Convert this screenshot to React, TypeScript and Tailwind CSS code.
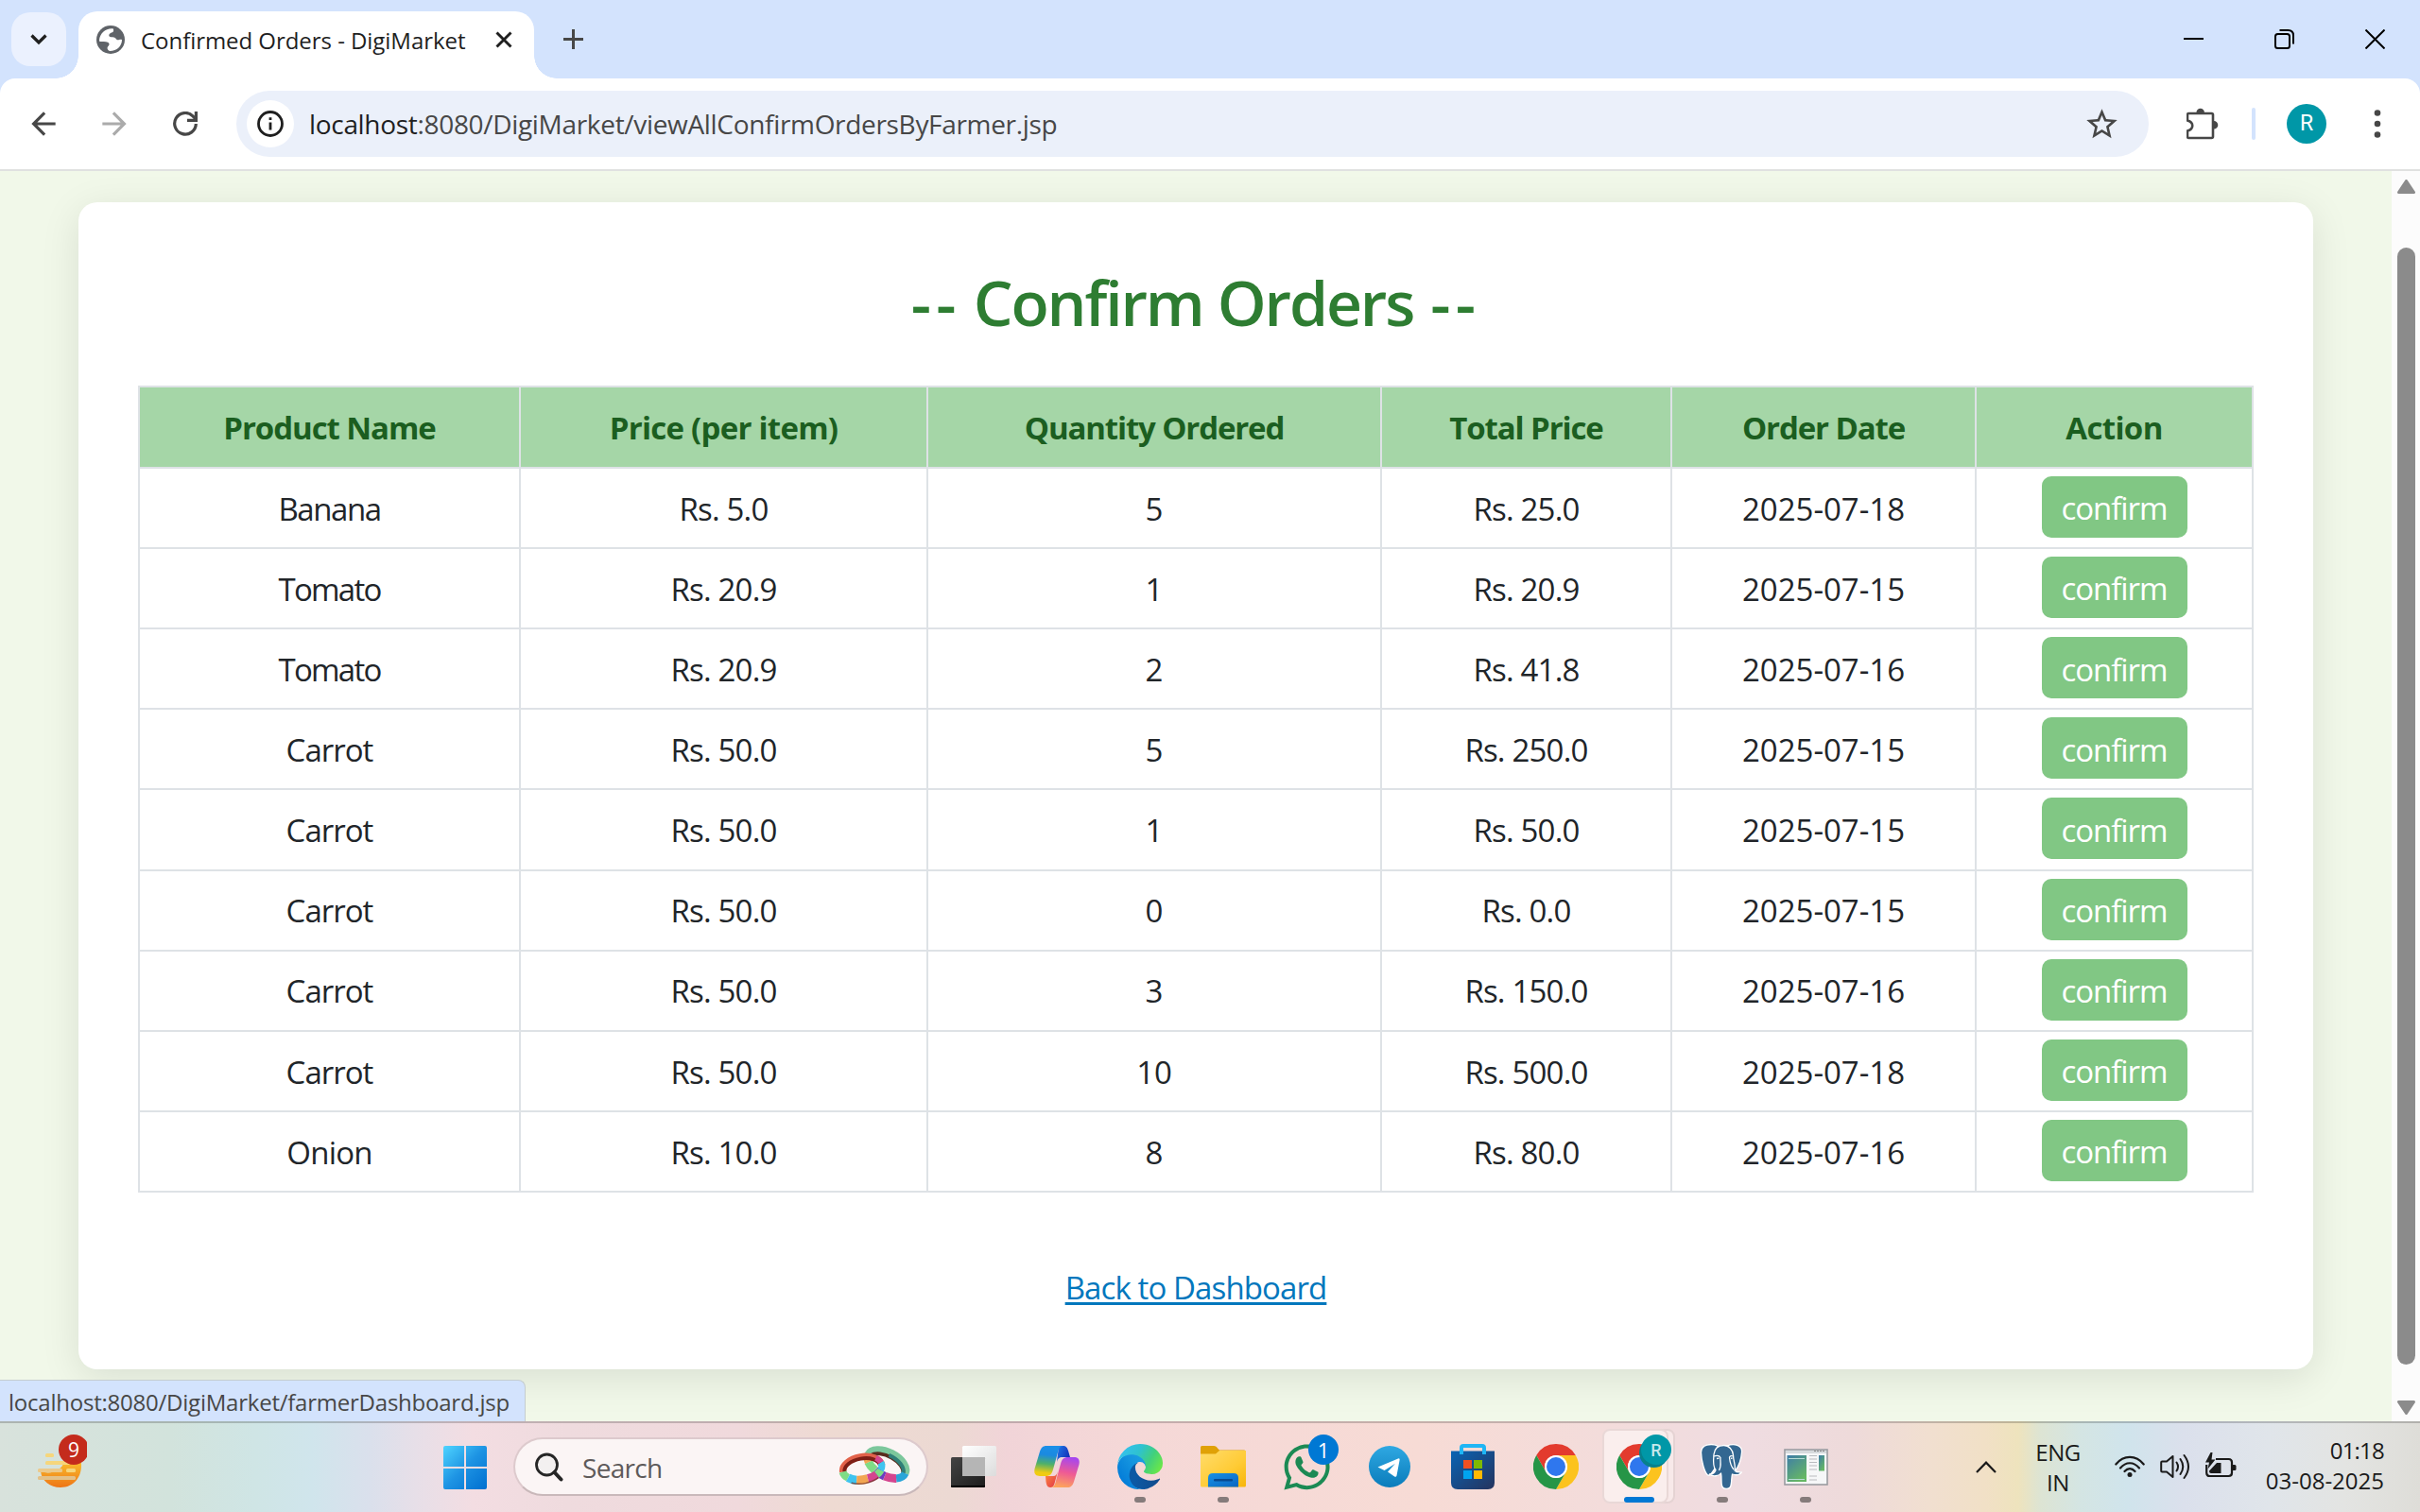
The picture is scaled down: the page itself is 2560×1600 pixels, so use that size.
import React from "react";
import { MdArrowBack, MdArrowForward, MdStarBorder } from "react-icons/md";
import { FaWhatsapp } from "react-icons/fa";

type Order = { name: string; price: string; qty: string; total: string; date: string };

const orders: Order[] = [
  { name: "Banana", price: "Rs. 5.0", qty: "5", total: "Rs. 25.0", date: "2025-07-18" },
  { name: "Tomato", price: "Rs. 20.9", qty: "1", total: "Rs. 20.9", date: "2025-07-15" },
  { name: "Tomato", price: "Rs. 20.9", qty: "2", total: "Rs. 41.8", date: "2025-07-16" },
  { name: "Carrot", price: "Rs. 50.0", qty: "5", total: "Rs. 250.0", date: "2025-07-15" },
  { name: "Carrot", price: "Rs. 50.0", qty: "1", total: "Rs. 50.0", date: "2025-07-15" },
  { name: "Carrot", price: "Rs. 50.0", qty: "0", total: "Rs. 0.0", date: "2025-07-15" },
  { name: "Carrot", price: "Rs. 50.0", qty: "3", total: "Rs. 150.0", date: "2025-07-16" },
  { name: "Carrot", price: "Rs. 50.0", qty: "10", total: "Rs. 500.0", date: "2025-07-18" },
  { name: "Onion", price: "Rs. 10.0", qty: "8", total: "Rs. 80.0", date: "2025-07-16" },
];

const headers: [string, string][] = [
  ["Product Name", "tracking-[-0.0323em]"],
  ["Price (per item)", "tracking-[-0.0225em]"],
  ["Quantity Ordered", "tracking-[-0.0345em]"],
  ["Total Price", "tracking-[-0.0339em]"],
  ["Order Date", "tracking-[-0.0339em]"],
  ["Action", "tracking-[-0.0196em]"],
];

/* ---------- Browser chrome ---------- */

function TabStrip() {
  return (
    <div className="flex h-[83px] items-start bg-[#d3e3fd]">
      <div className="mt-[13px] ml-3 flex h-[57px] w-[58px] items-center justify-center rounded-[20px] bg-[#ebf1fe]">
        <svg width="18" height="12" viewBox="0 0 18 12" fill="none" stroke="#1f1f1f" strokeWidth="3.2">
          <path d="M1.5 1.5 9 9l7.5-7.5" />
        </svg>
      </div>
      <div className="relative mt-[12px] ml-[13px] flex h-[71px] w-[482px] items-start rounded-t-[20px] bg-white">
        <span className="absolute bottom-0 -left-6 h-6 w-6 bg-[radial-gradient(circle_at_0_0,transparent_23.5px,#fff_24px)]" />
        <span className="absolute -right-6 bottom-0 h-6 w-6 bg-[radial-gradient(circle_at_100%_0,transparent_23.5px,#fff_24px)]" />
        <svg className="mt-[15px] ml-[19px]" width="30" height="30" viewBox="0 0 30 30">
          <circle cx="15" cy="15" r="15" fill="#5f6368" />
          <path
            d="M17.5 3.2C10 2.5 3.6 8 3 15.5l.4 1.4c3 .2 6.2-.2 8.6.8 1.800.8 2 2.300.8 3.700-1 1-1.600 2-1 3.500.4 1 1.200 1.700 2.200 2.100C22 27 27 21.500 27 15c-2.200-.6-3.300.6-4.600.3-1.300-.2-1.600-1.400-2.600-2.200-1.600-1.200-4.300-.2-5.800-1.300-1.400-1-.6-3.200 1-3.900 1.300-.6 2.600-.7 3-2 .3-.9.1-2-.5-2.700z"
            fill="#fff"
          />
        </svg>
        <span className="mt-[11px] ml-[17px] w-[345px] text-[24px] leading-[40px] tracking-[-0.002em] whitespace-nowrap text-[#1f1f1f]">
          Confirmed Orders - DigiMarket
        </span>
        <svg className="mt-[21px] ml-[30px]" width="18" height="18" viewBox="0 0 18 18" stroke="#1f1f1f" strokeWidth="2.9">
          <path d="m1.500 1.500 15 15M16.500 1.500l-15 15" />
        </svg>
      </div>
      <svg className="mt-[31px] ml-[31px]" width="21" height="21" viewBox="0 0 21 21" stroke="#474747" strokeWidth="3">
        <path d="M0 10.500h21M10.500 0v21" />
      </svg>
      <div className="mt-[31px] mr-[37px] ml-auto flex items-center gap-[75px]">
        <svg width="21" height="21" viewBox="0 0 21 21">
          <path d="M0 10h21" stroke="#000" strokeWidth="2" />
        </svg>
        <svg width="21" height="21" viewBox="0 0 21 21" fill="none" stroke="#000" strokeWidth="2">
          <rect x="1" y="5" width="15" height="15" rx="2.500" />
          <path d="M5.500 1H14.500Q20 1 20 6.500V15.500" />
        </svg>
        <svg width="21" height="21" viewBox="0 0 21 21" stroke="#000" strokeWidth="2">
          <path d="m.5.5 20 20M20.500.5l-20 20" />
        </svg>
      </div>
    </div>
  );
}

function Toolbar() {
  return (
    <div className="bg-[#d3e3fd]">
      <div className="flex h-[98px] items-start rounded-t-[16px] border-b-2 border-[#e0e1e0] bg-white pt-[13px]">
        <div className="flex h-[70px] w-[250px] items-center">
          <MdArrowBack className="ml-[27px]" size={38} color="#474747" />
          <MdArrowForward className="ml-[37px]" size={38} color="#ababab" />
          <svg className="ml-[43px]" width="26" height="26" viewBox="0 0 26 26" fill="none" stroke="#474747" strokeWidth="3.2">
            <path d="M24.300 13a11.300 11.300 0 1 1-3.300-8.200l3.200 3.400" />
            <path d="M24.400 0v9.400H15" />
          </svg>
        </div>
        <div className="flex h-[70px] w-[2023px] items-center rounded-full bg-[#ebf0fa]">
          <span className="ml-[11px] flex h-[50px] w-[50px] items-center justify-center rounded-full bg-white">
            <svg width="28" height="28" viewBox="0 0 28 28" fill="none" stroke="#1f1f1f">
              <circle cx="14" cy="14" r="12.500" strokeWidth="2.800" />
              <path d="M14 12.500v8M14 7.300v2.600" strokeWidth="2.800" />
            </svg>
          </span>
          <span className="ml-[16px] text-[28px] leading-[40px] tracking-[-0.0113em] whitespace-nowrap text-[#474747]">
            <span className="text-[#1f1f1f]">localhost</span>:8080/DigiMarket/viewAllConfirmOrdersByFarmer.jsp
          </span>
          <MdStarBorder className="mr-[30px] ml-auto" size={39} color="#474747" />
        </div>
        <div className="flex h-[70px] items-center">
          <svg className="ml-[40px]" width="34" height="36" viewBox="0 0 34 36" fill="none" stroke="#474747">
            <path
              d="M2.500 7H26.500Q28 7 28 8.500V31.500Q28 33 26.500 33H2.500Q1 33 1 31.500V25.500C8 23.500 8 16.500 1 14.500V8.500Q1 7 2.500 7Z"
              strokeWidth="2.600"
            />
            <path d="M10.500 6a4.200 4.200 0 0 1 8.400 0zM29 15a4.200 4.200 0 0 1 0 8.600z" fill="#474747" stroke="none" />
          </svg>
          <span className="ml-[35px] h-[34px] w-1 rounded-full bg-[#d3e3fd]" />
          <span className="ml-[33px] flex h-[42px] w-[42px] items-center justify-center rounded-full bg-[#0097a7] font-['Roboto'] text-[23px] text-white">
            R
          </span>
          <svg className="ml-[50px]" width="8" height="32" viewBox="0 0 8 32" fill="#474747">
            <circle cx="4" cy="4.500" r="3.300" />
            <circle cx="4" cy="16" r="3.300" />
            <circle cx="4" cy="27.500" r="3.300" />
          </svg>
        </div>
      </div>
    </div>
  );
}

/* ---------- Page ---------- */

function Cell({ children, className = "" }: { children: React.ReactNode; className?: string }) {
  return (
    <div className={`flex items-center justify-center border-r-2 border-b-2 border-[#dee2e6] pt-[2px] whitespace-nowrap ${className}`}>
      {children}
    </div>
  );
}

function nameTracking(name: string) {
  if (name === "Tomato") return "tracking-[-0.0528em]";
  if (name === "Banana") return "tracking-[-0.0434em]";
  if (name === "Onion") return "tracking-[-0.024em]";
  return "tracking-[-0.03em]";
}

function OrdersTable() {
  return (
    <div className="mt-[49px] ml-[63px] grid w-[2238px] grid-cols-[403px_431px_480px_307px_322px_293px] grid-rows-[86px_repeat(9,85.11px)] border-t-2 border-l-2 border-[#dee2e6] text-[33px] text-[#212529]">
      {headers.map(([label, tracking]) => (
        <Cell key={label} className={`bg-[#a5d6a7] font-bold text-[#1b5e20] ${tracking}`}>
          {label}
        </Cell>
      ))}
      {orders.map((o, i) => (
        <React.Fragment key={i}>
          <Cell className={nameTracking(o.name)}>{o.name}</Cell>
          <Cell className="tracking-[-0.0245em]">{o.price}</Cell>
          <Cell>{o.qty}</Cell>
          <Cell className="tracking-[-0.0245em]">{o.total}</Cell>
          <Cell>{o.date}</Cell>
          <Cell>
            <button className="mb-[4px] h-[65px] w-[154px] rounded-[10px] bg-[#81c784] pt-[3px] tracking-[-0.0309em] text-white">
              confirm
            </button>
          </Cell>
        </React.Fragment>
      ))}
    </div>
  );
}

function Page() {
  return (
    <div className="relative flex h-[1323px] overflow-hidden bg-[#f1f8e9]">
      <main className="mt-[33px] ml-[83px] h-[1235px] w-[2364px] rounded-[20px] bg-white pt-[64px] shadow-[0_9px_42px_rgba(0,0,0,0.1)]">
        <h1 className="h-[81px] text-center text-[66px] leading-[83px] font-semibold tracking-[-0.032em] text-[#2e7d32]">
          <span className="mr-[-2px] tracking-[0.08em]">--</span> Confirm Orders <span className="ml-[3px] tracking-[0.08em]">--</span>
        </h1>
        <OrdersTable />
        <div className="mt-[76px] text-center text-[33px] leading-[50px] tracking-[-0.027em]">
          <a className="text-[#0277bd] underline decoration-[3px] underline-offset-[3px]">Back to Dashboard</a>
        </div>
      </main>
      <div className="ml-auto flex w-[30px] flex-col items-center bg-[#fcfcfc] pt-[9px]">
        <svg width="19" height="15" viewBox="0 0 19 15" fill="#8b8b8b" stroke="#8b8b8b" strokeWidth="3" strokeLinejoin="round">
          <path d="M9.500 1.500 17.500 13.500H1.500Z" />
        </svg>
        <span className="mt-[57px] h-[1182px] w-[19px] rounded-full bg-[#8b8b8b]" />
        <svg className="mt-[38px]" width="19" height="15" viewBox="0 0 19 15" fill="#8b8b8b" stroke="#8b8b8b" strokeWidth="3" strokeLinejoin="round">
          <path d="M9.500 13.500 1.500 1.500h16Z" />
        </svg>
      </div>
      <div className="absolute bottom-0 left-0 h-[44px] w-[556px] rounded-tr-[8px] border-t border-r border-[#c5cdd0] bg-[#d3e3fd] pl-[9px] text-[24px] leading-[46px] tracking-[-0.0096em] whitespace-nowrap text-[#474747]">
        localhost:8080/DigiMarket/farmerDashboard.jsp
      </div>
    </div>
  );
}

/* ---------- Taskbar icons ---------- */

function Weather() {
  return (
    <svg width="56" height="60" viewBox="36 1516 56 60">
      <defs>
        <linearGradient id="moon" x1="0" y1="0" x2="0" y2="1">
          <stop offset="0" stopColor="#f9c02e" />
          <stop offset="1" stopColor="#ee7516" />
        </linearGradient>
      </defs>
      <path d="M86 1548C87 1563 78 1574 64 1574C53 1574 44 1567 43 1557C54 1561 66 1556 68 1546Z" fill="url(#moon)" />
      <g fill="#f6d67c">
        <rect x="48" y="1538" width="9" height="4" rx="1.500" />
        <rect x="48" y="1546" width="26" height="4" rx="1.500" />
        <rect x="40" y="1554" width="26" height="4" rx="1.500" fill="#ecc98a" />
        <rect x="70" y="1554" width="10" height="4" rx="1.500" />
        <rect x="40" y="1562" width="40" height="4" rx="1.500" fill="#e3c188" />
      </g>
      <circle cx="78" cy="1534" r="16" fill="#c42b1c" />
      <text x="78" y="1541.500" fontSize="21" fill="#fff" textAnchor="middle" fontFamily="Open Sans">9</text>
    </svg>
  );
}

function WindowsLogo() {
  return (
    <svg width="46" height="46" viewBox="0 0 46 46">
      <defs>
        <linearGradient id="win" x1="0" y1="0" x2="1" y2="1">
          <stop offset="0" stopColor="#4fd4ff" />
          <stop offset="0.500" stopColor="#1d93e3" />
          <stop offset="1" stopColor="#006fd0" />
        </linearGradient>
      </defs>
      <path d="M2 0H22V22H0V2Q0 0 2 0ZM24 0H44Q46 0 46 2V22H24ZM0 24H22V46H2Q0 46 0 44ZM24 24H46V44Q46 46 44 46H24Z" fill="url(#win)" />
    </svg>
  );
}

function Rings() {
  return (
    <svg width="76" height="44" viewBox="0 0 76 44" fill="none">
      <g transform="rotate(27 50 21)">
        <path d="M28 19A22 12.500 0 0 1 72 19" stroke="#7cc79c" strokeWidth="8" />
        <path d="M31 18.500A20 11 0 0 1 70 20" stroke="#5a2c1e" strokeWidth="4" />
        <path d="M48 9.500A20 11 0 0 1 70 20" stroke="#2f7f78" strokeWidth="4" />
        <path d="M72 19A22 12.500 0 0 1 66 28" stroke="#2aa5d8" strokeWidth="8" />
        <path d="M66 28A22 12.500 0 0 1 54 31.500" stroke="#d4458f" strokeWidth="9" />
        <path d="M54 31.500A22 12.500 0 0 1 42 30.500" stroke="#6d3cc0" strokeWidth="9" />
        <path d="M42 30.500A22 12.500 0 0 1 32 26" stroke="#7fdc86" strokeWidth="9" />
        <path d="M32 26A22 12.500 0 0 1 28 19" stroke="#f2a552" strokeWidth="8" />
      </g>
      <g transform="rotate(-10 25 23)">
        <path d="M4 24A21 12.500 0 0 1 46 24" stroke="#e2624a" strokeWidth="7" />
        <path d="M6 24A19 10.500 0 0 1 44 24" stroke="#7e1f16" strokeWidth="4" />
        <path d="M4 24A21 12.500 0 0 0 8.500 31" stroke="#7fdc86" strokeWidth="8" />
        <path d="M8.500 31A21 12.500 0 0 0 17 35" stroke="#3fc3ef" strokeWidth="9" />
        <path d="M17 35A21 12.500 0 0 0 29 35.500" stroke="#f2a552" strokeWidth="9" />
        <path d="M29 35.500A21 12.500 0 0 0 39 33" stroke="#d4458f" strokeWidth="9" />
        <path d="M39 33A21 12.500 0 0 0 44 29" stroke="#7fdc86" strokeWidth="8" />
        <path d="M44 29A21 12.500 0 0 0 45.500 21" stroke="#3fc3ef" strokeWidth="7" />
        <path d="M45.500 21A21 12.500 0 0 0 41 15.500" stroke="#d4458f" strokeWidth="6" />
        <path d="M11 37A23 14.500 0 0 0 40 36.500" stroke="#6e2a1c" strokeOpacity="0.7" strokeWidth="1.500" />
      </g>
    </svg>
  );
}

function TaskView() {
  return (
    <svg width="48" height="46" viewBox="0 0 48 46">
      <defs>
        <linearGradient id="tvd" x1="0" y1="0" x2="1" y2="1">
          <stop offset="0" stopColor="#444" />
          <stop offset="1" stopColor="#1c1c1c" />
        </linearGradient>
        <linearGradient id="tvl" x1="0" y1="0" x2="1" y2="1">
          <stop offset="0" stopColor="#fff" />
          <stop offset="1" stopColor="#dcdcdc" />
        </linearGradient>
      </defs>
      <rect x="12" y="1" width="36" height="32" rx="1.500" fill="url(#tvl)" />
      <rect x="0" y="13" width="36" height="32" rx="1.500" fill="url(#tvd)" />
      <path d="M0 43h36v.5q0 1.500-1.500 1.500h-33Q0 45 0 43.500z" fill="#000" />
      <path d="M12 13h24v20H12z" fill="#b5b5b5" />
    </svg>
  );
}

function Copilot() {
  return (
    <svg width="48" height="46" viewBox="0 0 48 46">
      <defs>
        <linearGradient id="cpa" x1="0.500" y1="0" x2="0.400" y2="1">
          <stop offset="0" stopColor="#1b8fe8" />
          <stop offset="0.300" stopColor="#1b8ae0" />
          <stop offset="0.600" stopColor="#4eb06a" />
          <stop offset="0.900" stopColor="#f0cc12" />
        </linearGradient>
        <linearGradient id="cpb" x1="0.600" y1="0" x2="0.400" y2="1">
          <stop offset="0" stopColor="#a646ef" />
          <stop offset="0.500" stopColor="#ee5a95" />
          <stop offset="1" stopColor="#fda55b" />
        </linearGradient>
        <linearGradient id="cpc" x1="0" y1="0" x2="1" y2="0.500">
          <stop offset="0" stopColor="#1f7bea" />
          <stop offset="1" stopColor="#1532b8" />
        </linearGradient>
        <linearGradient id="cpd" x1="0" y1="0" x2="1" y2="1">
          <stop offset="0" stopColor="#ff8a3c" />
          <stop offset="1" stopColor="#e0354a" />
        </linearGradient>
      </defs>
      <path d="M26 1H30C34 1 35 3 36 6L38 13H30C26 13 25 15 24 18Z" fill="url(#cpc)" />
      <path d="M12 33H20C23 33 24 31 25 28L22 39C21 43 20 45 17 45C14 45 13 42 12.500 39Z" fill="url(#cpd)" />
      <path d="M13 1H31C27 1 26 4 25 8L20 26C18.500 31 17 33 12 33H6C1 33-.5 30 .6 25L6 7C7.500 3 9 1 13 1Z" fill="url(#cpa)" />
      <path d="M35 45H17C21 45 22 42 23 38L28 20C29.500 15 31 13 36 13H42C47 13 48.500 16 47.400 21L42 39C40.500 43 39 45 35 45Z" fill="url(#cpb)" />
    </svg>
  );
}

function Edge() {
  return (
    <svg width="48" height="48" viewBox="0 0 256 256">
      <defs>
        <linearGradient id="ea" x1="0.200" y1="0.500" x2="1" y2="0.500">
          <stop offset="0" stopColor="#0c59a4" />
          <stop offset="1" stopColor="#114a8b" />
        </linearGradient>
        <linearGradient id="eb" x1="0.900" y1="0.200" x2="0.100" y2="0.900">
          <stop offset="0" stopColor="#1b9de2" />
          <stop offset="0.300" stopColor="#1595df" />
          <stop offset="1" stopColor="#0078d7" />
        </linearGradient>
        <linearGradient id="ec" x1="0" y1="0.300" x2="1" y2="0.700">
          <stop offset="0" stopColor="#35c1f1" />
          <stop offset="0.400" stopColor="#2fc2cf" />
          <stop offset="0.700" stopColor="#41d07c" />
          <stop offset="1" stopColor="#6be748" />
        </linearGradient>
      </defs>
      <path fill="url(#ea)" d="M235.680 195.460a93.730 93.730 0 01-10.540 4.710 101.870 101.870 0 01-35.900 6.460c-47.320 0-88.540-32.550-88.540-74.320A31.480 31.480 0 01117.130 105c-42.800 1.800-53.800 46.400-53.800 72.530 0 73.880 68.090 78.370 82.760 78.370 7.910 0 19.840-2.300 27-4.560l1.310-.44a128.340 128.340 0 0066.600-52.800 4 4 0 00-5.320-2.640z" />
      <path fill="url(#eb)" d="M105.730 246.420a79.200 79.200 0 01-22.740-21.340 80.720 80.720 0 0129.530-120c3.120-1.470 8.450-4.130 15.540-4a32.350 32.350 0 0125.690 13 31.880 31.880 0 016.360 18.660c0-.21 24.460-79.600-80-79.600-43.900 0-80 41.660-80 78.210a130.150 130.150 0 0012.110 56 128 128 0 00156.380 62 75.550 75.550 0 01-62.780-3z" />
      <path fill="url(#ec)" d="M152.330 148.860c-.81 1.050-3.300 2.500-3.300 5.660 0 2.610 1.700 5.120 4.720 7.230 14.380 10 41.490 8.680 41.560 8.680a59.560 59.560 0 0030.270-8.350 61.380 61.380 0 0030.430-52.880c.26-22.410-8-37.310-11.340-43.910C223.460 23.840 177.720 0 128 0A128 128 0 000 126.200c.48-36.540 36.800-66.050 80-66.050 3.500 0 23.460.34 42 10.070 16.340 8.580 24.900 18.940 30.850 29.210 6.180 10.670 7.280 24.150 7.280 29.520s-2.740 13.330-7.800 19.910z" />
    </svg>
  );
}

function Explorer() {
  return (
    <svg width="48" height="44" viewBox="0 0 48 44">
      <defs>
        <linearGradient id="fa" x1="0" y1="0" x2="1" y2="1">
          <stop offset="0" stopColor="#ffdc6b" />
          <stop offset="0.600" stopColor="#ffcb35" />
          <stop offset="1" stopColor="#f7b50a" />
        </linearGradient>
        <linearGradient id="fb" x1="0" y1="0" x2="1" y2="1">
          <stop offset="0" stopColor="#1890e6" />
          <stop offset="1" stopColor="#0a66c0" />
        </linearGradient>
      </defs>
      <path d="M1.500 0H14c2 0 3 1 4 2.500L20 4.500H46.500L48 6v5H0V1.500Q0 0 1.500 0Z" fill="#e0a106" />
      <path d="M0 8.500H16L20 5H48V42Q48 43.500 46.500 43.500H1.500Q0 43.500 0 42Z" fill="url(#fa)" />
      <path d="M8 43.500V34q0-5 5-5H35q5 0 5 5v9.500Z" fill="url(#fb)" />
      <rect x="14" y="35" width="20" height="2.400" rx="1" fill="#084a91" />
    </svg>
  );
}

function Telegram() {
  return (
    <svg width="44" height="44" viewBox="0 0 44 44">
      <defs>
        <linearGradient id="tg" x1="0" y1="0" x2="0" y2="1">
          <stop offset="0" stopColor="#2fa8e2" />
          <stop offset="1" stopColor="#0a7cbb" />
        </linearGradient>
      </defs>
      <circle cx="22" cy="22" r="22" fill="url(#tg)" />
      <path d="M9.500 22.500 31 13.500q2-.6 1.600 1.600L29.500 31.500q-.6 2-2.300.9L20 27.500 28 18.800 16.500 26Z" fill="#fff" />
    </svg>
  );
}

function Store() {
  return (
    <svg width="46" height="48" viewBox="0 0 46 48">
      <defs>
        <linearGradient id="st" x1="0" y1="0" x2="1" y2="1">
          <stop offset="0" stopColor="#0a64b4" />
          <stop offset="1" stopColor="#25335d" />
        </linearGradient>
      </defs>
      <path d="M0 7.500h46V41q0 7-7 7H7q-7 0-7-7Z" fill="url(#st)" />
      <path d="M11 11V4q0-2 2-2H33q2 0 2 2v7" fill="none" stroke="#1fb6f5" strokeWidth="4" />
      <path d="M13 17h9v9h-9z" fill="#f25022" />
      <path d="M24 17h9v9h-9z" fill="#7fba00" />
      <path d="M13 28h9v9h-9z" fill="#00a4ef" />
      <path d="M24 28h9v9h-9z" fill="#ffb900" />
    </svg>
  );
}

function Chrome() {
  return (
    <svg width="48" height="48" viewBox="0 0 48 48">
      <path d="M24 12H44.785A24 24 0 0 0 3.215 12L13.608 30A12 12 0 0 1 24 12Z" fill="#e33b2e" />
      <path d="M44.785 12H24A12 12 0 0 1 34.392 30L24 48A24 24 0 0 0 44.785 12Z" fill="#fcc31e" />
      <path d="M24 48 34.392 30A12 12 0 0 1 13.608 30L3.215 12A24 24 0 0 0 24 48Z" fill="#269547" />
      <circle cx="24" cy="24" r="12" fill="#fff" />
      <circle cx="24" cy="24" r="10" fill="#2f77ee" />
    </svg>
  );
}

function Elephant() {
  return (
    <svg width="48" height="50" viewBox="0 0 48 50" fill="#336791" stroke="#fff" strokeWidth="1.300" strokeLinejoin="round">
      <path d="M19 3C12 0 1.500 1.500 1.500 10C1.800 19 5 31 8.500 34C11 35.500 13.500 31 16 27Z" />
      <path d="M29 3C36 0 45.500 2 44.500 10C44 17 41 25 37.500 29.500L30 25Z" />
      <path d="M15 12C16 4 21 2.500 25.500 2.500C31 2.500 35 7 35.500 13C35.500 19 38.500 24 37 29C39 31.500 42 31 44.500 30.800C42 34 37.500 34 34.500 33C33.500 37 34 41 33 45C32 49.500 24.500 49.500 23.500 45C22.500 41 23.500 37 22.500 32C20.500 35 14 36 10.500 33C13.500 33 16 31.500 17 28.500C13.500 25 14.500 18 15 12Z" />
      <path d="M15 14C18 13 21 13.500 22 15.500C21.500 20 23.500 24 20.500 29M35.500 14C33 13 31.500 14 31.500 15.500C32 20 32.500 24 36 28" fill="none" />
      <path d="M18 16.500l2.500-.3M33 16.300l1.500-.3" />
    </svg>
  );
}

function AppWindow() {
  return (
    <svg width="47" height="39" viewBox="0 0 47 39">
      <defs>
        <linearGradient id="aw" x1="0" y1="0" x2="0.600" y2="1">
          <stop offset="0" stopColor="#3e7ca8" />
          <stop offset="1" stopColor="#66b765" />
        </linearGradient>
      </defs>
      <rect x="1" y="1" width="45" height="37" fill="#f6f7f8" stroke="#9a9ca1" strokeWidth="1.600" />
      <path d="M2 2h43v3H2z" fill="#d6dadd" />
      <path d="M32 2.500h12" stroke="#888" strokeDasharray="2 1" />
      <rect x="3.500" y="7" width="20.500" height="28" fill="url(#aw)" />
      <path d="M5 10.500h17M5 32.500h17" stroke="#b6dcd6" />
      <path d="M27 7.500h8M27 11h8M27 14.500h8M27 18h8M27 22h8M27 29h8M27 33h8" stroke="#b9bcc0" strokeWidth="1.200" />
      <rect x="37" y="7" width="6" height="16.500" fill="url(#aw)" />
    </svg>
  );
}

function Tile({ children, mark, badge }: { children: React.ReactNode; mark?: boolean; badge?: React.ReactNode }) {
  return (
    <div className="relative flex h-[92px] w-[88px] items-center justify-center">
      {children}
      {badge}
      {mark && <span className="absolute bottom-[8px] left-[38px] h-[6px] w-3 rounded-full bg-[#857b7b]" />}
    </div>
  );
}

function Tray() {
  return (
    <div className="ml-auto flex h-[92px] w-[480px] items-center text-[24px] leading-[32px] text-[#1a1a1a]">
      <svg className="ml-[10px]" width="22" height="13" viewBox="0 0 22 13" fill="none" stroke="#1a1a1a" strokeWidth="2.200">
        <path d="m1 12 10-10.300L21 12" />
      </svg>
      <div className="mt-px ml-[35px] w-[60px] text-center tracking-[-0.02em]">
        <div>ENG</div>
        <div>IN</div>
      </div>
      <svg className="ml-[30px]" width="32" height="24" viewBox="0 0 32 24" fill="none" stroke="#1a1a1a" strokeWidth="2.200" strokeLinecap="round">
        <path d="M1.300 9.500C9.500-.6 22.500-.6 30.700 9.500M6 13.500c5.800-7 14.200-7 20 0M10.500 17c3.400-3.900 7.600-3.900 11 0" />
        <circle cx="16" cy="20.500" r="2.500" fill="#1a1a1a" stroke="none" />
      </svg>
      <svg className="ml-[16px]" width="32" height="28" viewBox="0 0 32 28" fill="none" stroke="#1a1a1a" strokeWidth="2" strokeLinecap="round" strokeLinejoin="round">
        <path d="M1.200 9.500q0-1 1-1H7L13.500 3V25L7 19.500H2.200q-1 0-1-1Z" />
        <path d="M17.500 9.500q3 4.500 0 9M21.500 6q5.500 8 0 16M25.500 2q9 12 0 24" />
      </svg>
      <svg className="mt-[-5px] ml-[16px]" width="33" height="28" viewBox="0 0 33 28" fill="none">
        <path d="M11 8H24.500Q28 8 28 11.500V22.500Q28 26 24.500 26H4.500Q1.200 26 1.200 22.500V14" stroke="#1a1a1a" strokeWidth="2.200" />
        <path d="M4 20.500 12 12h4.500v11H6Q4 23 4 21Z" fill="#1a1a1a" />
        <path d="M5.500 1 0 11.500h4L2.500 18.500 10.500 8.500H6.500L7.500 1Z" fill="#1a1a1a" />
        <path d="M28 14h3q1.500 0 1.500 1.500v3q0 1.500-1.500 1.500h-3z" fill="#1a1a1a" />
      </svg>
      <div className="mt-[-2px] mr-[38px] ml-auto text-right">
        <div className="tracking-[-0.033em]">01:18</div>
        <div>03-08-2025</div>
      </div>
    </div>
  );
}

function Taskbar() {
  return (
    <div className="flex h-[96px] items-start border-t-2 border-black/20 bg-[linear-gradient(90deg,#d8e2dc_0px,#d2e3dc_180px,#cfe5e5_270px,#d0e5ec_330px,#dae0ec_390px,#e7dfe8_440px,#f3dde2_500px,#efdbde_600px,#f0d9dc_780px,#eedad2_880px,#ecd9d3_1010px,#f1d4d8_1065px,#f5d8d7_1200px,#f7dbd5_1500px,#f3dcdb_1700px,#efdce1_1850px,#eedada_1960px,#f1dfd0_2040px,#f1e0c6_2100px,#eee3bd_2135px,#dde4d3_2158px,#d4e5e3_2200px,#d0e4ec_2250px,#dbe0ec_2310px,#e0e5ea_2400px,#e3e4e2_2480px,#deddd8_2560px)] bg-origin-border">
      <div className="flex h-[92px] w-[448px] items-start pt-[10px] pl-[36px]">
        <Weather />
      </div>
      <div className="flex h-[92px] w-[95px] items-center pt-[2px] pl-[21px]">
        <WindowsLogo />
      </div>
      <div className="mt-[15px] mr-[4px] flex h-[62px] w-[439px] items-center rounded-full border-2 border-[#ddcacd] border-b-[#c9b8ba] bg-[#fbf5f5]">
        <svg className="ml-[21px]" width="30" height="31" viewBox="0 0 30 31" fill="#f3f0f0" stroke="#262626">
          <circle cx="12.500" cy="13" r="11" strokeWidth="2.800" />
          <path d="m20.500 21 7 7.500" strokeWidth="4" strokeLinecap="round" />
        </svg>
        <span className="mt-[2px] ml-[20px] text-[28px] leading-[40px] tracking-[-0.025em] text-[#5e5a5a]">Search</span>
        <span className="mr-[17px] ml-auto">
          <Rings />
        </span>
      </div>
      <Tile><TaskView /></Tile>
      <Tile><Copilot /></Tile>
      <Tile mark><Edge /></Tile>
      <Tile mark><Explorer /></Tile>
      <Tile
        badge={
          <span className="absolute top-[12px] left-[46px] flex h-8 w-8 items-center justify-center rounded-full bg-[#0078d4] text-[22px] leading-none text-white">
            1
          </span>
        }
      >
        <FaWhatsapp className="shrink-0" size={55} color="#1c8a54" />
      </Tile>
      <Tile><Telegram /></Tile>
      <Tile><Store /></Tile>
      <Tile><Chrome /></Tile>
      <div className="relative flex h-[92px] w-[88px] items-center justify-center">
        <span className="absolute top-[6px] left-[20px] h-[79px] w-[62px] rounded-[8px] border-2 border-[#e5d3d3] bg-[#f8e9e9]" />
        <span className="absolute top-[6px] left-[5px] h-[79px] w-[70px] rounded-[8px] border-2 border-[#e9d8d7] bg-[#faeeed]" />
        <span className="relative">
          <Chrome />
        </span>
        <span className="absolute top-[16px] left-[44px] h-[31px] w-[31px] rounded-full bg-[#07808c]" />
        <span className="absolute top-[12px] left-[46px] flex h-8 w-8 items-center justify-center rounded-full bg-[#0097a7] font-['Roboto'] text-[18px] font-medium text-[#c5e8ec]">
          R
        </span>
        <span className="absolute bottom-[8px] left-[28px] h-[6px] w-8 rounded-full bg-[#0078d4]" />
      </div>
      <Tile mark><Elephant /></Tile>
      <Tile mark><AppWindow /></Tile>
      <Tray />
    </div>
  );
}

export default function App() {
  return (
    <div className="flex h-[1600px] w-[2560px] flex-col overflow-hidden bg-white font-['Open_Sans','Noto_Sans',sans-serif]">
      <TabStrip />
      <Toolbar />
      <Page />
      <Taskbar />
    </div>
  );
}
